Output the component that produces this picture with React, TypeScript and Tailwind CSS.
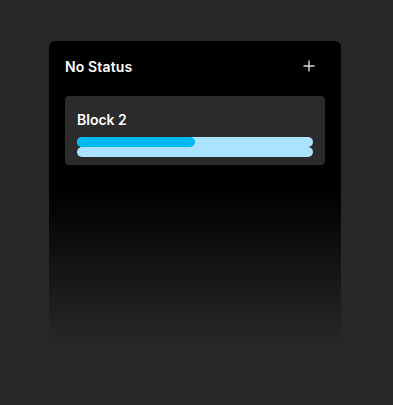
import React from 'react';

const blocks = [{ name: 'Block 2', progress: 50 }];

const App: React.FC = () => {
  return (
    <div className="min-h-[405px] w-full bg-[#282828] pt-[41px] pl-[49px] font-['Inter',sans-serif]">
      <div className="flex h-[305px] w-[292px] flex-col rounded-md bg-[linear-gradient(to_bottom,#000_0%,#000_48%,#282828_100%)] px-4">
        {/* Column header */}
        <div className="flex h-[50px] items-center justify-between">
          <span className="text-[14px] font-semibold tracking-[0.01em] text-white">No Status</span>
          <button className="mr-[8px] flex h-4 w-4 items-center justify-center text-[#d8d8d8]">
            <svg width="12" height="12" viewBox="0 0 12 12" fill="none" stroke="currentColor" strokeWidth="1.4">
              <path d="M6 0.5v11M0.5 6h11" />
            </svg>
          </button>
        </div>

        {/* Cards */}
        <div className="mt-[5px] flex flex-col gap-2">
          {blocks.map((b) => (
            <div key={b.name} className="h-[69px] rounded-[4px] bg-[#2b2b2b] px-3 pt-[15px]">
              <div className="text-[14px] font-semibold leading-[18px] text-white">{b.name}</div>
              <div className="mt-[8px] flex flex-col">
                <div className="relative h-[10px] w-[236px] rounded-full bg-[#abe2ff]">
                  <div
                    className="absolute left-0 top-0 h-[10px] rounded-full bg-[#00b9f1]"
                    style={{ width: `${b.progress}%` }}
                  />
                </div>
                <div className="h-[10px] w-[236px] rounded-full bg-[#abe2ff]" />
              </div>
            </div>
          ))}
        </div>
      </div>
    </div>
  );
};

export default App;
